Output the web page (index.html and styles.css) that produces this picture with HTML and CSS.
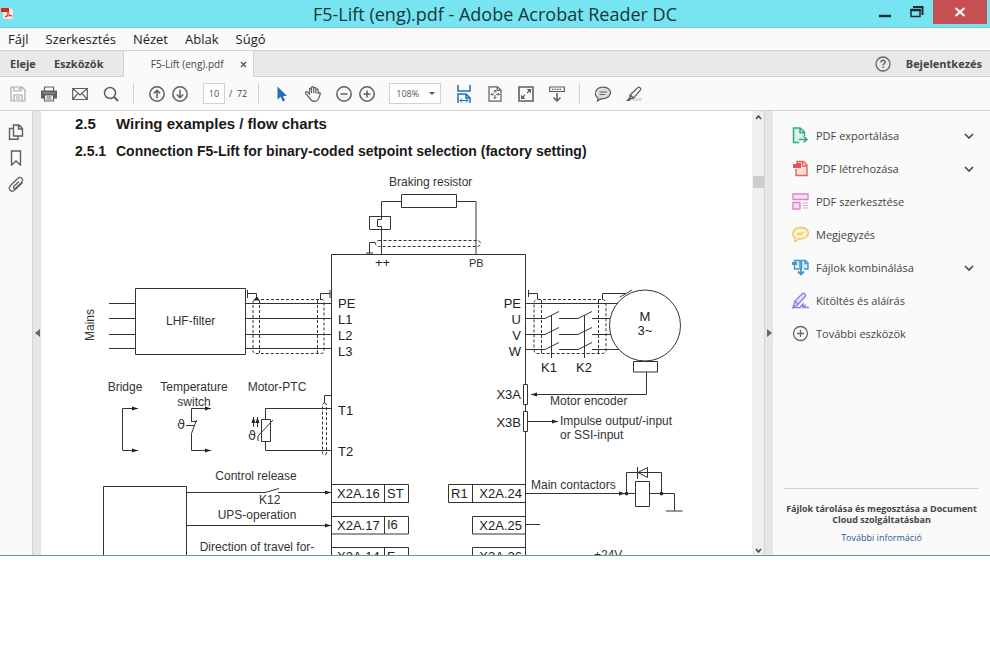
FILE: index.html
```html
<!DOCTYPE html>
<html lang="hu">
<head>
  <meta charset="UTF-8">
  <title>F5-Lift (eng).pdf - Adobe Acrobat Reader DC</title>
  <link rel="stylesheet" href="styles.css">
</head>
<body>
  <div class="window">
    <!-- ===== Title bar ===== -->
    <header class="titlebar">
      <svg class="app-icon" width="13" height="13" viewBox="0 0 13 13">
        <path d="M2 1h8l2 2v9H2z" fill="#f4f1ee" stroke="#c9c4c0" stroke-width=".6"/>
        <rect x="0" y="1" width="8" height="4" fill="#d8281c"/>
        <path d="M4 10c2-1 3-3 3-5 0 2 2 4 4 4-2-1-5 0-7 1z" fill="none" stroke="#d8281c"/>
      </svg>
      <h1 class="title">F5-Lift (eng).pdf - Adobe Acrobat Reader DC</h1>
      <div class="window-controls">
        <button class="win-btn" aria-label="Minimize"><svg width="14" height="16" viewBox="0 0 14 16"><path d="M1 12h12" stroke="#1b2b2e" stroke-width="2.4"/></svg></button>
        <button class="win-btn" aria-label="Restore"><svg width="14" height="14" viewBox="0 0 14 14"><g fill="none" stroke="#1b2b2e"><path d="M1 5h9v6.500H1z" stroke-width="1.5"/><path d="M.3 5h10.400" stroke-width="2.5"/><path d="M3 2h9.500v8" stroke-width="2"/></g></svg></button>
        <button class="win-btn close" aria-label="Close"><svg width="12" height="12" viewBox="0 0 12 12"><path d="M1.500 2l9 8M10.500 2l-9 8" stroke="#fff" stroke-width="2"/></svg></button>
      </div>
    </header>

    <!-- ===== Menu ===== -->
    <nav class="menubar">
      <a href="#">Fájl</a>
      <a href="#">Szerkesztés</a>
      <a href="#">Nézet</a>
      <a href="#">Ablak</a>
      <a href="#">Súgó</a>
    </nav>

    <!-- ===== Tabs ===== -->
    <div class="tabbar">
      <a href="#" class="home-tab">Eleje</a>
      <a href="#" class="home-tab">Eszközök</a>
      <div class="doc-tab">
        <span>F5-Lift (eng).pdf</span>
        <button class="tab-close" aria-label="Close tab"><svg width="7" height="7" viewBox="0 0 7 7"><path d="M1 1l5 5M6 1L1 6" stroke="#555" stroke-width="1.3"/></svg></button>
      </div>
      <div class="account">
        <button class="icon-btn" aria-label="Help"><svg width="16" height="16" viewBox="0 0 16 16"><circle cx="8" cy="8" r="7" fill="none" stroke="#666" stroke-width="1.3"/><path d="M5.900 6.500c0-3 4.300-2.700 4.200-.2 0 1.500-2.100 1.500-2.100 3M8 10.600v1.400" fill="none" stroke="#666" stroke-width="1.5"/></svg></button>
        <a href="#" class="sign-in">Bejelentkezés</a>
      </div>
    </div>

    <!-- ===== Toolbar ===== -->
    <div class="toolbar">
      <div class="tools">
        <button class="icon-btn faded" aria-label="Save"><svg class="ico" viewBox="0 0 16 16"><path d="M1 1h11l3 3v11H1zM4 1v4h7V1M4 15V9h8v6M9 2v2M6 11h4M6 13h4"/></svg></button>
        <button class="icon-btn" aria-label="Print"><svg class="ico" viewBox="0 0 16 16"><path d="M0 4.500h16v8h-3V9H3v3.500H0z" fill="#5f5f5f" stroke="none"/><path d="M3.500 5V1h9v4M3.500 9v6h9V9zM5.500 11h5M5.500 13h5"/><path d="M1.500 7h13" stroke="#ccc" stroke-width=".6"/></svg></button>
        <button class="icon-btn" aria-label="Mail"><svg class="ico" viewBox="0 0 16 16"><path d="M.7 2.500h14.600v11H.7zM.7 2.500L8 9l7.300-6.500M.7 13.500L6 7.300M15.300 13.500L10 7.300"/></svg></button>
        <button class="icon-btn" aria-label="Search"><svg class="ico bold" viewBox="0 0 16 16"><circle cx="7" cy="7" r="5.500"/><path d="M11 11l4 4" stroke-width="2"/></svg></button>
      </div>
      <span class="sep"></span>
      <div class="pair">
        <button class="icon-btn" aria-label="Previous page"><svg class="ico bold" viewBox="0 0 16 16"><circle cx="8" cy="8" r="7.200"/><path d="M8 12.300V4.500M4.800 7.500L8 4.300l3.200 3.200"/></svg></button>
        <button class="icon-btn" aria-label="Next page"><svg class="ico bold" viewBox="0 0 16 16"><circle cx="8" cy="8" r="7.200"/><path d="M8 3.700v7.800M4.800 8.500L8 11.700l3.200-3.200"/></svg></button>
      </div>
      <label class="page-nav"><input class="page-input" type="text" value="10" aria-label="Page"><span>/&nbsp; 72</span></label>
      <span class="sep"></span>
      <div class="tools">
        <button class="icon-btn" aria-label="Select"><svg class="ico" viewBox="0 0 16 16"><path d="M3.500.5v13l3.200-2.700 2 4.700 2.300-1-2-4.500h4z" fill="#1f70bd" stroke="none"/></svg></button>
        <button class="icon-btn" aria-label="Hand"><svg class="ico" viewBox="0 0 16 16"><path d="M3.300 10.700L.8 7.300c-.8-1.300.9-2.200 1.800-1.100L4.500 8V3.200c0-1.500 2-1.500 2 0V7 1.900c0-1.600 2.200-1.600 2.200 0V7 2.400c0-1.500 2.200-1.500 2.200 0V7.400 3.900c0-1.500 2.200-1.500 2.200 0V8c.3-1.800 2.300-1.900 2.200-.5 0 1.300-.8 2.300-1.300 4.100-.7 2.500-2 3.700-4.800 3.700-3 0-4-2-5.700-4.600z"/></svg></button>
        <div class="pair">
          <button class="icon-btn" aria-label="Zoom out"><svg class="ico bold" viewBox="0 0 16 16"><circle cx="8" cy="8" r="7.200"/><path d="M4.500 8h7"/></svg></button>
          <button class="icon-btn" aria-label="Zoom in"><svg class="ico bold" viewBox="0 0 16 16"><circle cx="8" cy="8" r="7.200"/><path d="M4.500 8h7M8 4.500v7"/></svg></button>
        </div>
      </div>
      <label class="zoom"><select aria-label="Zoom"><option>108%</option></select></label>
      <div class="tools">
        <button class="icon-btn" aria-label="Fit width"><svg width="14" height="18" viewBox="0 0 14 18"><path d="M1 0v6h12V0M1 18V9h8l4 4v5M9 9v4h4" fill="none" stroke="#1f70bd" stroke-width="1.5"/><path d="M3 15.500h8M5 13.500l-2 2 2 2M9 13.500l2 2-2 2" fill="none" stroke="#1f70bd"/></svg></button>
        <button class="icon-btn" aria-label="Fit page"><svg class="ico" viewBox="0 0 16 16"><path d="M2 .8h8.500L14 4.300v10.900H2zM10.200 1v3.500H14"/><path d="M8 4v3M8 9v3.500M4 8.300h3M9 8.300h3.500M6.500 5.500L8 4l1.500 1.500M6.500 11L8 12.500 9.500 11M5.300 7L4 8.300l1.300 1.300M11 7l1.300 1.300L11 9.600" stroke-width="1"/></svg></button>
        <button class="icon-btn" aria-label="Full screen"><svg class="ico" viewBox="0 0 16 16"><path d="M1 1h14v14H1z" stroke-width="1.6"/><path d="M9 7l3-3M7 9l-3 3"/><path d="M8.700 3h4.300v4.300zM3 8.700V13h4.300z" fill="#5f5f5f" stroke="none"/></svg></button>
        <button class="icon-btn" aria-label="Read mode"><svg class="ico" viewBox="0 0 16 16"><path d="M.7 1h14.600v4.500H.7z"/><path d="M3 3.300h10" stroke-dasharray="1.500 1"/><path d="M8 7v8M4.500 11.500L8 15l3.500-3.500" stroke-width="1.5"/></svg></button>
      </div>
      <span class="sep"></span>
      <div class="tools">
        <button class="icon-btn" aria-label="Comment"><svg class="ico" viewBox="0 0 16 16"><path d="M3 12.200C-3 7.500 2 1.200 8 1.200s9.500 4.500 6 9c-2 2.300-5 2.800-8 2.500L2.500 15z" fill="#ddd"/><path d="M4.500 6h7.500M4.500 8.500H10"/></svg></button>
        <button class="icon-btn" aria-label="Highlight"><svg class="ico" viewBox="0 0 16 16"><path d="M6 12h10v3H5z" fill="#ddd" stroke="none"/><path d="M4 9L12 1.500c1-1 3.500 1 2.500 2.500L7.500 12.200 4 12.500zM4.500 9l3 3"/><path d="M3.500 11L0 15h3.500L6 12.500z" fill="#5f5f5f" stroke="none"/></svg></button>
      </div>
    </div>

    <!-- ===== Workspace ===== -->
    <div class="workspace">
      <div class="rail">
        <button class="icon-btn" aria-label="Page thumbnails"><svg class="ico" viewBox="0 0 16 16"><path d="M5.500 1h5.500l3.500 3.500V12h-9zM10.500 1v4h4M5 4.500H1.500v10.700H10V12.500" stroke-width="1.4"/></svg></button>
        <button class="icon-btn" aria-label="Bookmarks"><svg class="ico" viewBox="0 0 16 16"><path d="M3.500 1h9v14L8 11l-4.500 4z" stroke-width="1.4"/></svg></button>
        <button class="icon-btn" aria-label="Attachments"><svg class="ico" viewBox="0 0 16 16"><path d="M11 5.500L6 10.300c-1.300 1.500.4 3 1.800 1.700l5.700-5.600c3-3.200-.8-6.700-4-3.700L3 9c-4 4 .3 8.200 4 4.800l7.500-7" stroke-width="1.3"/></svg></button>
      </div>
      <button class="splitter left" aria-label="Toggle left pane"></button>

      <main class="page">
        <h2><span class="num">2.5</span>Wiring examples / flow charts</h2>
        <h3><span class="num">2.5.1</span>Connection F5-Lift for binary-coded setpoint selection (factory setting)</h3>
        <svg class="diagram" width="711" height="390" viewBox="41 165 711 390">
          <defs>
            <marker id="arrow" markerUnits="userSpaceOnUse" markerWidth="7" markerHeight="6" refX="6" refY="3" orient="auto"><path d="M0 1l6 2-6 2z" fill="#222"/></marker>
          </defs>

          <!-- inverter -->
          <g class="wire">
            <path d="M331.500 555V254.500h194V555"/>
          </g>

          <!-- braking resistor -->
          <g class="wire">
            <path d="M401.500 194.500h55v13h-55zM369.500 216.500h21v13h-21zM456 201.500h20V254M401 201.500h-19.500V219.500h-4v7h4V254M375 242.500h-5.500v11M366 253h7"/>
            <rect class="dash" x="375.500" y="240.500" width="105" height="6" rx="3"/>
          </g>
          <text x="389" y="186">Braking resistor</text>
          <text class="pin" x="375" y="267">++</text>
          <text class="small" x="469" y="267">PB</text>

          <!-- mains and filter -->
          <g class="wire">
            <path d="M135.500 288.500h110v66h-110zM109 303.500h26M109 318.500h26M109 334.500h26M109 348.500h26M246 303.500h85M246 318.500h85M246 334.500h85M246 348.500h85"/>
            <path d="M247.500 290v8M247 293.500h9.500v6M320.500 300v-6.500h10M330 290v8"/>
            <path class="dash" d="M256 299.500h66q2 0 2 3v48q0 3-3 3h-65q-3 0-3-3v-48q0-3 3-3M259.500 300v53M317.500 300v53"/>
            <path d="M254 300l3-3 2 3z" fill="#222"/>
          </g>
          <text transform="translate(94 341) rotate(-90)">Mains</text>
          <text x="166" y="325">LHF-filter</text>
          <text class="pin" x="338" y="308">PE</text>
          <text class="pin" x="338" y="324">L1</text>
          <text class="pin" x="338" y="340">L2</text>
          <text class="pin" x="338" y="356">L3</text>

          <!-- motor -->
          <g class="wire">
            <circle cx="645" cy="325.500" r="35.500"/>
            <path d="M526 303.500h92M526 318.500h19l14-7M559 318.500h19l14-7M592 318.500h18M526 334.500h19l14-7M559 334.500h19l14-7M592 334.500h19M526 349.500h19l14-7M559 349.500h19l14-7M592 349.500h27M551.500 315v43M584.500 315v43"/>
            <path d="M528.500 290v7M528 293.500h9.500v6M602.500 300v-6.500h23M620 297l12-7"/>
            <path class="dash" d="M538 299.500h64q4 0 4 4v46q0 4-4 4h-64q-4 0-4-4v-46q0-4 4-4M541.500 300v53M598.500 300v53"/>
            <path d="M633.500 361.500h24v10.500h-24zM646.500 372v22.500"/>
            <path d="M646.500 394.500H531" marker-end="url(#arrow)"/>
            <path d="M528 421.500h30" marker-end="url(#arrow)"/>
            <path class="solid" d="M523.500 384.500h4v20h-4zM523.500 411.500h4v20h-4z"/>
          </g>
          <text class="pin" text-anchor="end" x="521" y="308">PE</text>
          <text class="pin" text-anchor="end" x="521" y="324">U</text>
          <text class="pin" text-anchor="end" x="521" y="340">V</text>
          <text class="pin" text-anchor="end" x="521" y="356">W</text>
          <text class="pin" x="541" y="372">K1</text>
          <text class="pin" x="576" y="372">K2</text>
          <text class="pin" text-anchor="middle" x="645" y="321">M</text>
          <text class="pin" text-anchor="middle" x="645" y="335">3~</text>
          <text class="pin" text-anchor="end" x="521" y="399">X3A</text>
          <text class="pin" text-anchor="end" x="521" y="427">X3B</text>
          <text x="550" y="405">Motor encoder</text>
          <text x="560" y="425">Impulse output/-input</text>
          <text x="560" y="439">or SSI-input</text>

          <!-- temperature inputs -->
          <text text-anchor="middle" x="125" y="391">Bridge</text>
          <text text-anchor="middle" x="194" y="391">Temperature</text>
          <text text-anchor="middle" x="194" y="406">switch</text>
          <text text-anchor="middle" x="277" y="391">Motor-PTC</text>
          <g class="wire">
            <path d="M122.500 450V408.500H138" marker-end="url(#arrow)"/>
            <path d="M122.500 450.500H138" marker-end="url(#arrow)"/>
            <path d="M191.500 421V408.500H211" marker-end="url(#arrow)"/>
            <path d="M191 421.500h6M196.500 420l-5 13.500v17H211" marker-end="url(#arrow)"/>
            <path d="M186 425.500h8M331 408.500h-65.500V419M261.500 419.500h9v22h-9zM265.500 442v8.500H331M258 441v-5l15-16M331.500 392v7M331 395.500h-6.500v7"/>
            <path d="M253.500 427v-10" marker-end="url(#arrow)"/>
            <path d="M257.500 427v-10" marker-end="url(#arrow)"/>
            <rect class="dash" x="322.500" y="403" width="4" height="52" rx="2"/>
          </g>
          <text class="theta" x="177" y="429">ϑ</text>
          <text class="theta" x="248" y="440">ϑ</text>
          <text class="pin" x="338" y="415">T1</text>
          <text class="pin" x="338" y="456">T2</text>

          <!-- control terminals, left side -->
          <g class="wire">
            <path d="M103.500 555v-68.500h83V555"/>
            <path d="M187 492.500h78l14-4M278 492.500h53" marker-end="url(#arrow)"/>
            <path d="M187 525.500h144" marker-end="url(#arrow)"/>
            <path d="M331 484.500h77.500v18H331M384.500 484v18M331 516.500h77.500v17.500H331M384.500 516v18M331 547.500h77.500v18M384.500 547v18"/>
          </g>
          <text text-anchor="middle" x="256" y="480">Control release</text>
          <text x="259" y="504">K12</text>
          <text text-anchor="middle" x="257" y="519">UPS-operation</text>
          <text text-anchor="middle" x="257" y="551">Direction of travel for-</text>
          <text class="pin" x="337" y="498">X2A.16</text>
          <text class="pin" x="387" y="498">ST</text>
          <text class="pin" x="337" y="530">X2A.17</text>
          <text class="pin" x="387" y="529">I6</text>
          <text class="pin" x="337" y="561">X2A.14</text>
          <text class="pin" x="387" y="561">F</text>

          <!-- control terminals, right side -->
          <g class="wire">
            <path d="M525 484.500h-76.500v18H525M472.500 484v18M525 516.500h-52.500v17.500H525M525 547.500h-52.500v18M526 524.500h14"/>
            <path d="M526 493.500h99" marker-end="url(#arrow)"/>
            <path d="M626 493.500h10M650 493.500h24.500v17M666 511h16.500M626.500 493v-20.500h35V493M635.500 481.500h14v25h-14zM637.500 467v12M638 472.500l9.500-5v10z"/>
            <circle cx="626.500" cy="493.500" r="1.500" fill="#222"/>
            <circle cx="661.500" cy="493.500" r="1.500" fill="#222"/>
          </g>
          <text class="pin" x="451" y="498">R1</text>
          <text class="pin" text-anchor="end" x="522" y="498">X2A.24</text>
          <text class="pin" text-anchor="end" x="522" y="530">X2A.25</text>
          <text class="pin" text-anchor="end" x="522" y="561">X2A.26</text>
          <text x="531" y="489">Main contactors</text>
          <text x="594" y="559">+24V</text>
        </svg>
      </main>

      <div class="scrollbar">
        <svg width="7" height="5" viewBox="0 0 7 5"><path d="M1 4l2.500-3L6 4" fill="none" stroke="#444" stroke-width="1.5"/></svg>
        <span class="thumb"></span>
        <svg width="7" height="5" viewBox="0 0 7 5"><path d="M1 1l2.500 3L6 1" fill="none" stroke="#444" stroke-width="1.5"/></svg>
      </div>
      <button class="splitter right" aria-label="Toggle tools pane"></button>

      <aside class="tools-pane">
        <ul class="tool-list">
          <li><a href="#">
            <svg class="tool-icon" viewBox="0 0 17 17"><path d="M7 15.500H1.500V1H8l4.500 4v4M8 1v4.500h4.500" fill="#d5f2e8" stroke="#2fa984" stroke-width="1.5"/><path d="M7 12.500h7M11.500 9.500l3.500 3-3.500 3" fill="none" stroke="#2fa984" stroke-width="1.6"/></svg>
            <span>PDF exportálása</span>
            <svg class="chevron" viewBox="0 0 10 6"><path d="M1 1l4 4 4-4"/></svg>
          </a></li>
          <li><a href="#">
            <svg class="tool-icon" viewBox="0 0 17 17"><path d="M4 9v6.500h11V5L11.500 1.500H5V3M10.500 2v4H15" fill="#fbdcda" stroke="#e0655e" stroke-width="1.4"/><path d="M1 4h3l1-1h4v5H1z" fill="#e0554e"/></svg>
            <span>PDF létrehozása</span>
            <svg class="chevron" viewBox="0 0 10 6"><path d="M1 1l4 4 4-4"/></svg>
          </a></li>
          <li><a href="#">
            <svg class="tool-icon" viewBox="0 0 17 17"><path d="M1 1h15v5.500H1zM1 9.500h7V16H1z" fill="#f8dcf4" stroke="#dc86d0" stroke-width="1.4"/><path d="M10.500 10H16M10.500 12.500H16M10.500 15H16" stroke="#dcaad6"/></svg>
            <span>PDF szerkesztése</span>
          </a></li>
          <li><a href="#">
            <svg class="tool-icon" viewBox="0 0 17 17"><path d="M3.500 12.500C-2 8 2 1.500 8.500 1.500c8 0 10 7 5 10-2 1.500-4.500 1.500-6.500 1.500L3 15.500z" fill="#fdf1cb" stroke="#efc765" stroke-width="1.4"/><path d="M5 7h7M5 8.500h5" stroke="#efc765"/></svg>
            <span>Megjegyzés</span>
          </a></li>
          <li><a href="#">
            <svg class="tool-icon" viewBox="0 0 17 17"><path d="M7 10H2.500V6M2.500 4V1.500H8v9M9.500 10.500v-9h4L16 4v6h-4M13 1.500v3h3" fill="#d7eafa" stroke="#4597d3" stroke-width="1.4"/><path d="M0 3h5v3H0z" fill="#4597d3"/><path d="M9 10v5M6 12.500l3 3 3-3" fill="none" stroke="#4597d3" stroke-width="1.8"/></svg>
            <span>Fájlok kombinálása</span>
            <svg class="chevron" viewBox="0 0 10 6"><path d="M1 1l4 4 4-4"/></svg>
          </a></li>
          <li><a href="#">
            <svg class="tool-icon" viewBox="0 0 17 17"><path d="M1 15.500L3 9l7-7c2-1.800 4.500.5 3 2.500l-7 8zM3 9l3.500 3.500" fill="#e8e2fb" stroke="#8d7fdc" stroke-width="1.4"/><path d="M1 15.500h7l3-3.500v3.500l2-2v2H17" fill="none" stroke="#8d7fdc" stroke-width="1.4"/></svg>
            <span>Kitöltés és aláírás</span>
          </a></li>
          <li><a href="#">
            <svg class="tool-icon" viewBox="0 0 17 17"><path d="M5 8.500h7M8.500 5v7" stroke="#666" stroke-width="1.3"/><circle cx="8.500" cy="8.500" r="7" fill="none" stroke="#666" stroke-width="1.3"/></svg>
            <span>További eszközök</span>
          </a></li>
        </ul>
        <div class="cloud">
          <p>Fájlok tárolása és megosztása a Document Cloud szolgáltatásban</p>
          <a href="#">További információ</a>
        </div>
      </aside>
    </div>
  </div>
</body>
</html>
```
FILE: styles.css
```css
* {
  box-sizing: border-box;
}
body {
  margin: 0;
  background-color: #fff;
  color: #444;
  font-family: "Open Sans", "Noto Sans", sans-serif;
}
a {
  color: inherit;
  text-decoration: none;
}
button {
  border: 0;
  padding: 0;
  background: none;
  font: inherit;
}
svg {
  display: block;
  flex: none;
}
.window {
  border-bottom: 1px solid #5a9da3;
}

/* Title bar */
.titlebar {
  display: grid;
  grid-template-columns: 1fr auto 1fr;
  height: 28px;
  background-color: #76e5f1;
  border-bottom: 1px solid #74cbd5;
}
.app-icon {
  margin: 7px 0 0 1px;
}
.title {
  margin: 0;
  font-size: 18px;
  font-weight: 400;
  line-height: 29px;
  color: #17363b;
  white-space: nowrap;
}
.window-controls {
  display: flex;
  justify-content: flex-end;
  align-items: flex-start;
  padding-right: 3px;
}
.win-btn {
  display: flex;
  align-items: center;
  justify-content: center;
  width: 32px;
  height: 24px;
}
.win-btn.close {
  width: 54px;
  background-color: #c75054;
}

/* Menu and tabs */
.menubar {
  display: flex;
  align-items: center;
  gap: 17px;
  height: 23px;
  padding-left: 8px;
  background-color: #fafafa;
  border-bottom: 1px solid #d2d2d2;
  font-size: 13px;
  color: #222;
}
.tabbar {
  display: flex;
  height: 26px;
  background-color: #e9e9e9;
  font-size: 11px;
  line-height: 25px;
}
.home-tab {
  padding-left: 10px;
  font-weight: 700;
  border-bottom: 1px solid #d2d2d2;
}
.home-tab + .home-tab {
  padding: 0 19px 0 18px;
}
.doc-tab {
  display: flex;
  align-items: center;
  justify-content: flex-end;
  gap: 16px;
  width: 131px;
  padding-right: 6px;
  background-color: #fafafa;
  border: solid #d2d2d2;
  border-width: 0 1px;
  font-size: 10px;
}
.tab-close {
  display: flex;
}
.account {
  display: flex;
  flex: 1;
  align-items: center;
  justify-content: flex-end;
  gap: 11px;
  padding-right: 8px;
  border-bottom: 1px solid #d2d2d2;
}
.sign-in {
  font-weight: 700;
}

/* Toolbar */
.toolbar {
  display: flex;
  align-items: center;
  height: 34px;
  padding-left: 6px;
  background-color: #fafafa;
  border-bottom: 1px solid #d2d2d2;
}
.tools {
  display: flex;
  gap: 8px;
}
.pair {
  display: flex;
}
.icon-btn {
  display: flex;
  align-items: center;
  justify-content: center;
  width: 23px;
  height: 23px;
}
.ico {
  width: 16px;
  height: 16px;
  fill: none;
  stroke: #5f5f5f;
  stroke-width: 1.2;
}
.ico.bold {
  stroke-width: 1.5;
}
.faded .ico {
  stroke: #aaa;
}
.sep {
  width: 1px;
  height: 21px;
  margin: 0 11px;
  background-color: #d2d2d2;
}
.page-nav {
  display: flex;
  align-items: center;
  gap: 4px;
  margin-left: 12px;
  font-size: 9px;
}
.page-input,
.zoom select {
  height: 21px;
  margin: 0;
  border: 1px solid #d2d2d2;
  border-radius: 0;
  background-color: #fff;
  color: #555;
  font-family: inherit;
  font-size: 9px;
}
.page-input {
  width: 22px;
  padding: 0;
  text-align: center;
}
.zoom {
  position: relative;
  margin: 0 11px;
}
.zoom select {
  display: block;
  width: 52px;
  padding: 0 0 0 6px;
  appearance: none;
}
.zoom::after {
  content: "";
  position: absolute;
  top: 9px;
  right: 6px;
  border: 3px solid transparent;
  border-top-color: #555;
  border-bottom: 0;
}

/* Workspace */
.workspace {
  display: flex;
  background-color: #fff;
}
.rail {
  display: flex;
  flex-direction: column;
  align-items: center;
  gap: 3px;
  width: 32px;
  padding-top: 9px;
  background-color: #fafafa;
}
.splitter {
  display: flex;
  align-items: center;
  justify-content: center;
  width: 9px;
  background-color: #e6e6e6;
  border-left: 1px solid #d6d6d6;
}
.splitter::before {
  content: "";
  border: 4px solid transparent;
}
.splitter.left::before {
  border-right: 5px solid #666;
  border-left: 0;
}
.splitter.right::before {
  border-left: 5px solid #666;
  border-right: 0;
}
.page {
  flex: 1;
  min-width: 0;
  overflow: hidden;
  color: #1a1a1a;
  font-family: "Liberation Sans", sans-serif;
}
.page h2,
.page h3 {
  display: flex;
  margin: 0;
  padding-left: 34px;
  white-space: nowrap;
}
.page h2 {
  font-size: 15px;
  line-height: 26px;
}
.page h3 {
  font-size: 14px;
  line-height: 28px;
}
.num {
  width: 41px;
}

/* Wiring diagram */
.diagram {
  font-size: 12px;
  fill: #333;
}
.pin {
  font-size: 13px;
  fill: #222;
}
.small {
  font-size: 11px;
}
.theta {
  font-family: "DejaVu Sans", sans-serif;
  font-size: 13px;
}
.wire {
  fill: none;
  stroke: #333;
}
.dash {
  stroke-dasharray: 3 2;
}
.solid {
  fill: #fff;
}

.scrollbar {
  display: flex;
  flex-direction: column;
  align-items: center;
  width: 12px;
  padding: 4px 0 2px;
  background-color: #efefef;
}
.thumb {
  width: 11px;
  height: 12px;
  margin: 56px 0 auto;
  background-color: #cdcdcd;
}

/* Tools pane */
.tools-pane {
  display: flex;
  flex-direction: column;
  width: 217px;
  padding: 8px 11px 12px;
  background-color: #fafafa;
}
.tool-list {
  list-style: none;
  margin: 0;
  padding: 0 5px 0 8px;
  font-size: 11px;
}
.tool-list a {
  display: flex;
  align-items: center;
  height: 33px;
}
.tool-list span {
  flex: 1;
  margin-left: 7px;
}
.tool-icon {
  width: 17px;
  height: 17px;
}
.chevron {
  width: 10px;
  height: 6px;
  fill: none;
  stroke: #444;
  stroke-width: 1.6;
}
.cloud {
  margin-top: auto;
  padding-top: 14px;
  border-top: 1px solid #d2d2d2;
  font-size: 9px;
  line-height: 11px;
  text-align: center;
}
.cloud p {
  margin: 0 0 7px;
  font-weight: 700;
}
.cloud a {
  color: #2a5a8f;
}
```
